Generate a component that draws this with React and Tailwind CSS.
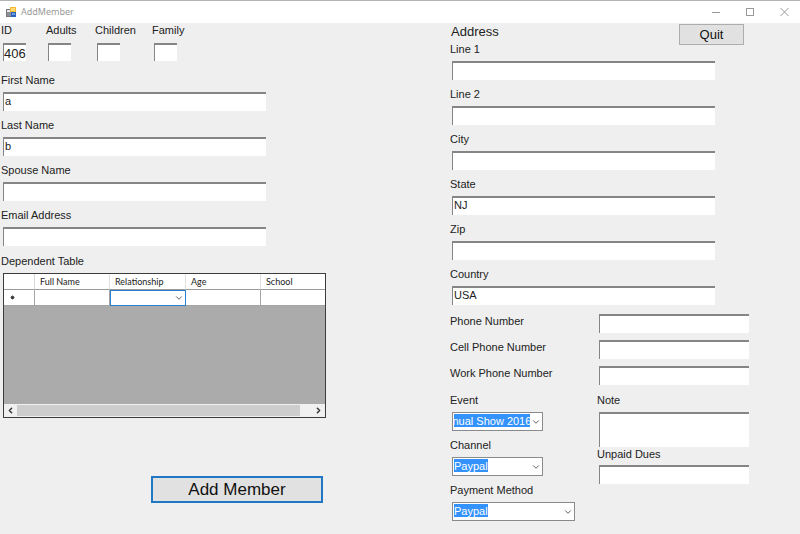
import { ChevronDown, ChevronLeft, ChevronRight } from "lucide-react";

const BEVEL =
  "block border-t-2 border-l border-[#858585] bg-white text-[11px] leading-4 text-[#222] outline-none";

function Field({ id, label, value = "" }) {
  return (
    <div className="flex flex-col gap-1">
      <label htmlFor={id} className="leading-4">
        {label}
      </label>
      <div className="pl-[2px]">
        <input id={id} defaultValue={value} className={`${BEVEL} h-[19px] w-full pl-px pb-[3px]`} />
      </div>
    </div>
  );
}

function Counter({ id, label, value = "", width }) {
  return (
    <div className={`flex flex-col gap-[5px] ${width}`}>
      <label htmlFor={id} className="leading-[15px]">
        {label}
      </label>
      <div className="pl-[2px]">
        <input
          id={id}
          defaultValue={value}
          className="block h-[18px] w-[23px] border-t-2 border-l border-[#858585] bg-white text-[13px] leading-4 text-[#222] outline-none"
        />
      </div>
    </div>
  );
}

function Combo({ id, label, options, width, selection }) {
  return (
    <div className="flex flex-col gap-1">
      <label htmlFor={id} className="leading-4">
        {label}
      </label>
      <div className={`relative ml-[2px] ${width}`}>
        <select
          id={id}
          className={`block h-[19px] w-full appearance-none border border-[#8a8a8a] bg-white bg-[linear-gradient(#3392fb,#3392fb)] bg-no-repeat bg-position-[1px_1px] pl-px pr-[11px] pb-[2px] text-[11px] leading-4 text-white outline-none ${selection}`}
        >
          {options.map((o) => (
            <option key={o}>{o}</option>
          ))}
        </select>
        <ChevronDown
          size={10}
          strokeWidth={2}
          className="pointer-events-none absolute top-[5px] right-[2px] text-[#444]"
        />
      </div>
    </div>
  );
}

function PhoneRow({ id, label }) {
  return (
    <div className="flex items-start">
      <label htmlFor={id} className="w-[149px] leading-[14px]">
        {label}
      </label>
      <input id={id} className={`${BEVEL} h-[19px] w-[150px]`} />
    </div>
  );
}

function AppIcon() {
  return (
    <svg width="11" height="11" viewBox="0 0 11 11" aria-hidden="true">
      <rect x="0.5" y="2.5" width="6" height="7" fill="#e9e9e9" stroke="#777" />
      <rect x="4" y="0" width="6" height="5" fill="#f2b92e" />
      <rect x="5" y="1" width="4" height="3" fill="#fbd873" />
      <rect x="1" y="5" width="4" height="4" fill="#8b8f99" />
      <rect x="5" y="5" width="5" height="5" fill="#2f63b8" />
      <rect x="6" y="6" width="3" height="2" fill="#6d9be0" />
    </svg>
  );
}

function TitleBar() {
  return (
    <header className="flex h-[23px] items-center justify-between border-t border-[#b4b4b4] bg-white pr-[11px] pl-[6px]">
      <div className="flex items-center gap-1">
        <AppIcon />
        <h1 className="font-['Noto_Sans',sans-serif] text-[9px] leading-4 text-[#999]">AddMember</h1>
      </div>
      <div className="flex items-center gap-[26px] text-[#999]">
        <button aria-label="Minimize">
          <svg width="8" height="8" viewBox="0 0 8 8" className="block" stroke="currentColor">
            <path d="M0 4.5H8" />
          </svg>
        </button>
        <button aria-label="Maximize">
          <svg width="8" height="8" viewBox="0 0 8 8" className="block" stroke="currentColor" fill="none">
            <rect x="0.5" y="0.5" width="7" height="7" />
          </svg>
        </button>
        <button aria-label="Close">
          <svg width="9" height="8" viewBox="0 0 9 8" className="block" stroke="currentColor">
            <path d="M0.5 0L8.5 8M8.5 0L0.5 8" />
          </svg>
        </button>
      </div>
    </header>
  );
}

function DependentGrid() {
  const head = "h-4 p-0 pl-[5px] text-left font-normal border-b border-[#9a9a9a]";
  const cell = "h-4 p-0 border-b border-r border-[#a5a5a5]";
  return (
    <div className="ml-[3px] flex h-[145px] w-[323px] flex-col overflow-hidden border border-[#3c3c3c] bg-[#ababab]">
      <table
        aria-label="Dependent Table"
        className="w-full table-fixed border-separate border-spacing-0 bg-white font-['Lato',sans-serif] text-[9px] leading-[14px] text-[#222]"
      >
        <thead>
          <tr>
            <th className={`${head} w-[31px] border-r border-r-[#d8d8d8]`}></th>
            <th className={`${head} w-[75px] border-r border-r-[#e0e0e0]`}>Full Name</th>
            <th className={`${head} w-[76px] border-r border-r-[#e0e0e0]`}>Relationship</th>
            <th className={`${head} w-[75px] border-r border-r-[#e0e0e0]`}>Age</th>
            <th className={head}>School</th>
          </tr>
        </thead>
        <tbody>
          <tr>
            <td className={`${cell} pl-[6px]`}>
              <svg width="5" height="5" viewBox="0 0 5 5" className="block" stroke="#222" aria-hidden="true">
                <path d="M2.5 0.5V4.5M0.5 2.5H4.5M1 1L4 4M4 1L1 4" strokeWidth="0.8" />
              </svg>
            </td>
            <td className={cell}>
              <input aria-label="Full Name" className="block h-[15px] w-full outline-none" />
            </td>
            <td className="h-4 p-0">
              <div className="relative">
                <select
                  aria-label="Relationship"
                  className="block h-4 w-full appearance-none border border-[#2a7fd0] bg-white outline-none"
                >
                  <option></option>
                </select>
                <ChevronDown
                  size={10}
                  strokeWidth={2}
                  className="pointer-events-none absolute top-[3px] right-[2px] text-[#444]"
                />
              </div>
            </td>
            <td className={cell}>
              <input aria-label="Age" className="block h-[15px] w-full outline-none" />
            </td>
            <td className="h-4 border-b border-[#a5a5a5] p-0">
              <input aria-label="School" className="block h-[15px] w-full outline-none" />
            </td>
          </tr>
        </tbody>
      </table>
      <div className="mt-auto flex h-[13px] items-center bg-[#f0f0f0] text-[#333]">
        <button aria-label="Scroll left" className="flex w-[13px] justify-center">
          <ChevronLeft size={9} strokeWidth={4} />
        </button>
        <div className="mr-[12px] h-[11px] flex-1 bg-[#cdcdcd]"></div>
        <button aria-label="Scroll right" className="flex w-[13px] justify-center">
          <ChevronRight size={9} strokeWidth={4} />
        </button>
      </div>
    </div>
  );
}

export default function App() {
  return (
    <div className="min-h-screen bg-[#efefef] font-['Liberation_Sans',Arial,sans-serif] text-[11px] text-[#222]">
      <TitleBar />
      <main className="flex items-start">
        <section className="w-[449px] shrink-0 pl-px">
          <div className="flex pb-[11px]">
            <Counter id="member-id" label="ID" value="406" width="w-[45px]" />
            <Counter id="adults" label="Adults" width="w-[49px]" />
            <Counter id="children" label="Children" width="w-[57px]" />
            <Counter id="family" label="Family" width="w-[49px]" />
          </div>
          <div className="flex w-[265px] flex-col gap-[6px]">
            <Field id="first-name" label="First Name" value="a" />
            <Field id="last-name" label="Last Name" value="b" />
            <Field id="spouse-name" label="Spouse Name" />
            <Field id="email" label="Email Address" />
          </div>
          <h2 className="pt-[7px] pb-1 leading-4">Dependent Table</h2>
          <div className="-ml-px">
            <DependentGrid />
          </div>
          <div className="pt-[58px] pl-[150px]">
            <button className="block h-[27px] w-[172px] border-2 border-[#2078c4] bg-[#e1e1e1] text-[17px] leading-5 text-[#111]">
              Add Member
            </button>
          </div>
        </section>

        <section className="flex-1 pl-px">
          <div className="flex items-start">
            <h2 className="w-[229px] pl-px text-[13px] leading-[18px]">Address</h2>
            <button className="-mb-1 mt-px h-[21px] w-[65px] border border-[#adadad] bg-[#e1e1e1] text-[13px] leading-4 text-[#111]">
              Quit
            </button>
          </div>
          <div className="flex w-[265px] flex-col gap-[6px]">
            <Field id="line-1" label="Line 1" />
            <Field id="line-2" label="Line 2" />
            <Field id="city" label="City" />
            <Field id="state" label="State" value="NJ" />
            <Field id="zip" label="Zip" />
            <Field id="country" label="Country" value="USA" />
          </div>
          <div className="flex flex-col gap-[7px] pt-[9px]">
            <PhoneRow id="phone" label="Phone Number" />
            <PhoneRow id="cell-phone" label="Cell Phone Number" />
            <PhoneRow id="work-phone" label="Work Phone Number" />
          </div>
          <div className="flex items-start pt-[7px]">
            <div className="flex w-[147px] flex-col gap-[6px]">
              <Combo
                id="event"
                label="Event"
                options={["Annual Show 2016"]}
                width="w-[91px]"
                selection="bg-size-[76px_13px] indent-[-15px]"
              />
              <Combo id="channel" label="Channel" options={["Paypal"]} width="w-[91px]" selection="bg-size-[34px_13px]" />
              <Combo
                id="payment"
                label="Payment Method"
                options={["Paypal"]}
                width="w-[123px]"
                selection="bg-size-[34px_13px]"
              />
            </div>
            <div className="flex w-[152px] flex-col">
              <label htmlFor="note" className="pb-1 leading-4">
                Note
              </label>
              <div className="pl-[2px]">
                <textarea id="note" className={`${BEVEL} h-[35px] w-full resize-none`} />
              </div>
              <label htmlFor="unpaid-dues" className="pb-1 leading-[14px]">
                Unpaid Dues
              </label>
              <div className="pl-[2px]">
                <input id="unpaid-dues" className={`${BEVEL} h-[19px] w-full`} />
              </div>
            </div>
          </div>
        </section>
      </main>
    </div>
  );
}
